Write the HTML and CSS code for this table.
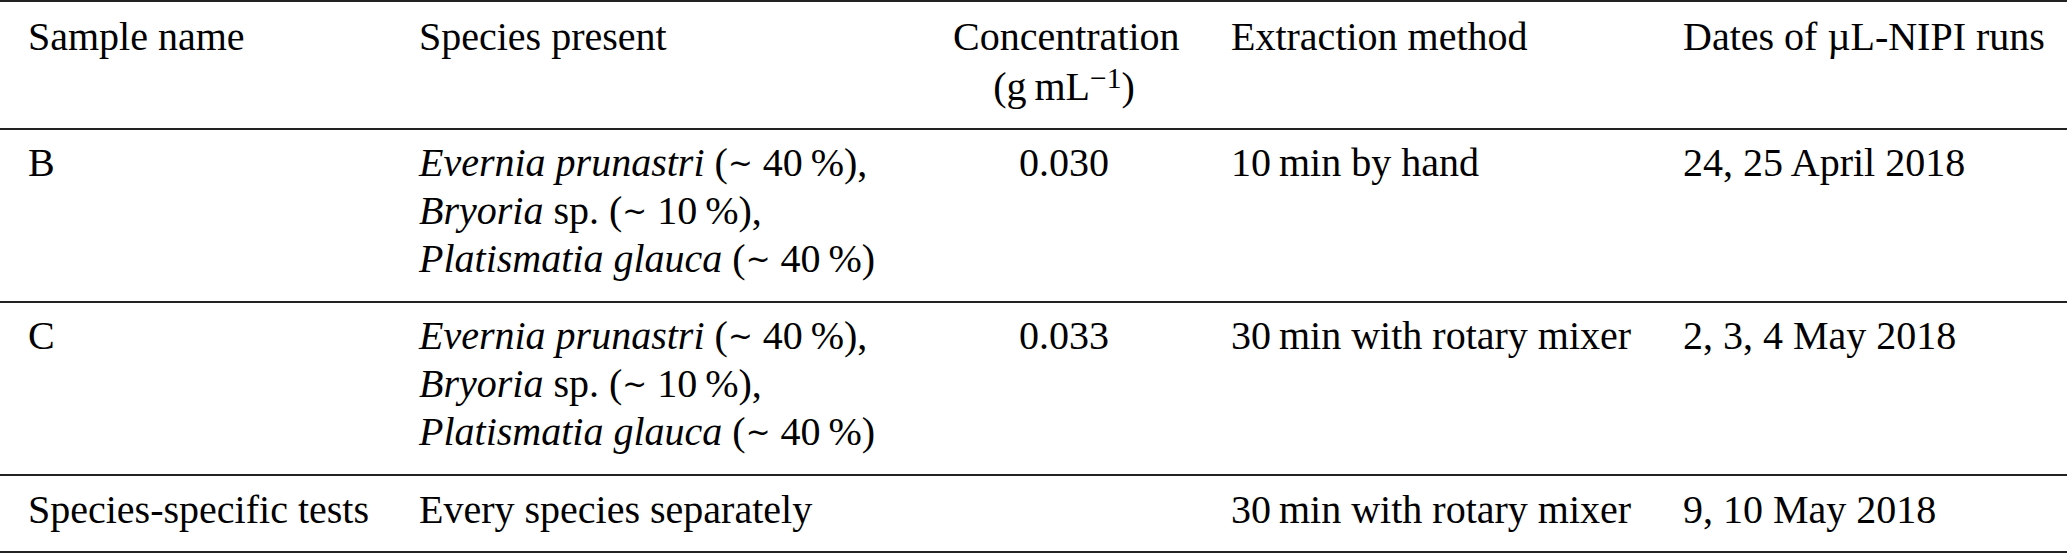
FILE: index.html
```html
<!DOCTYPE html>
<html lang="en">
<head>
<meta charset="utf-8">
<title>Samples</title>
<link rel="stylesheet" href="styles.css">
</head>
<body>
<table class="data">
  <colgroup>
    <col class="w1"><col class="w2"><col class="w3"><col class="w4"><col class="w5">
  </colgroup>
  <thead>
    <tr>
      <th>Sample name</th>
      <th>Species present</th>
      <th class="c">Concentration<br>(g&#8201;mL<sup>−1</sup>)</th>
      <th>Extraction method</th>
      <th>Dates of µL-NIPI runs</th>
    </tr>
  </thead>
  <tbody>
    <tr>
      <td>B</td>
      <td><i>Evernia prunastri</i> (<span class="sim">∼</span> 40&#8201;%),<br><i>Bryoria</i> sp. (<span class="sim">∼</span> 10&#8201;%),<br><i>Platismatia glauca</i> (<span class="sim">∼</span> 40&#8201;%)</td>
      <td class="c">0.030</td>
      <td>10&#8201;min by hand</td>
      <td>24, 25 April 2018</td>
    </tr>
    <tr>
      <td>C</td>
      <td><i>Evernia prunastri</i> (<span class="sim">∼</span> 40&#8201;%),<br><i>Bryoria</i> sp. (<span class="sim">∼</span> 10&#8201;%),<br><i>Platismatia glauca</i> (<span class="sim">∼</span> 40&#8201;%)</td>
      <td class="c">0.033</td>
      <td>30&#8201;min with rotary mixer</td>
      <td>2, 3, 4 May 2018</td>
    </tr>
    <tr class="last">
      <td>Species-specific tests</td>
      <td>Every species separately</td>
      <td class="c"></td>
      <td>30&#8201;min with rotary mixer</td>
      <td>9, 10 May 2018</td>
    </tr>
  </tbody>
</table>
</body>
</html>
```

FILE: styles.css
```css
html, body {
  margin: 0;
  padding: 0;
  background: #ffffff;
}

.data {
  width: 2067px;
  table-layout: fixed;
  border-collapse: separate;
  border-spacing: 0;
  border-top: 2px solid #222222;
  font-family: "Liberation Serif", "DejaVu Serif", serif;
  font-size: 40px;
  line-height: 48px;
  color: #000000;
}

.w1 { width: 391px; }
.w2 { width: 534px; }
.w3 { width: 278px; }
.w4 { width: 452px; }
.w5 { width: 412px; }

.data th,
.data td {
  padding: 9px 28px 18px 28px;
  text-align: left;
  vertical-align: top;
  font-weight: normal;
  white-space: nowrap;
  border-bottom: 2px solid #222222;
}

.data thead th {
  line-height: 50px;
  padding-top: 10px;
  padding-bottom: 16px;
}

.data .last td {
  padding-top: 10px;
  padding-bottom: 17px;
}

.data .c {
  text-align: center;
}

.data sup {
  font-size: 0.74em;
  line-height: 0;
  vertical-align: 0.42em;
}

.sim {
  font-family: "DejaVu Sans", sans-serif;
  font-size: 0.74em;
  line-height: 1;
  vertical-align: 0.1em;
}
```
